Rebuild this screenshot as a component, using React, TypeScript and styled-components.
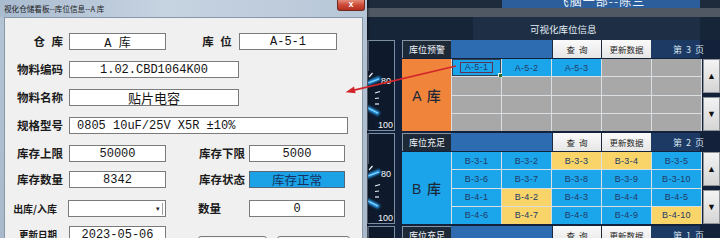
import React from 'react';
import styled, { createGlobalStyle } from 'styled-components';

const monoStack = `"Liberation Mono", "Noto Sans CJK SC", monospace`;
const cjkStack = `"Noto Sans CJK SC", "Noto Sans", sans-serif`;
const uiStack = `"Liberation Sans", "Noto Sans CJK SC", sans-serif`;

const GlobalStyle = createGlobalStyle`
    html, body {
        margin: 0;
        padding: 0;
        background: #16253a;
        overflow: hidden;
    }
    body {
        font-family: ${cjkStack};
    }
`;

const Screen = styled.div`
    position: relative;
    width: 720px;
    height: 238px;
    overflow: hidden;
    display: flex;
    background: #16253a;
`;

/* ---------- dialog window ---------- */

const Window = styled.div`
    flex: none;
    width: 367px;
    height: 262px;
    display: flex;
    flex-direction: column;
    background: linear-gradient(180deg, #b6c5d6 0%, #a8b8ca 100%);
    box-shadow: 1px 0 2px rgba(0, 0, 0, 0.6);
    z-index: 1;
`;

const TitleBar = styled.div`
    height: 17px;
    flex: none;
    display: flex;
    align-items: center;
    padding-left: 4px;
    background: linear-gradient(90deg, #a9bbcf 0%, #c6d3e1 45%, #b7c6d7 100%);
`;

const TitleText = styled.span`
    font-size: 7.6px;
    color: #1b1b1b;
    white-space: nowrap;
`;

const CloseButton = styled.div`
    margin-left: auto;
    margin-right: 2px;
    align-self: flex-start;
    width: 28px;
    height: 11px;
    box-sizing: border-box;
    background: linear-gradient(180deg, #e58b79 0%, #cc4a37 50%, #b3301f 100%);
    border: 1px solid #6e2a22;
    border-top: none;
    border-radius: 0 0 3px 3px;
    color: #fff;
    font: bold 9px/9px ${uiStack};
    text-align: center;
`;

const Form = styled.div`
    flex: 1;
    margin: 0 4px;
    padding-top: 15px;
    background: #f0f0f0;
    border: 1px solid #8797aa;
    display: flex;
    flex-direction: column;
`;

const Row = styled.div<{ $mt?: number; $top?: boolean }>`
    display: flex;
    align-items: ${p => (p.$top ? 'flex-start' : 'center')};
    margin-top: ${p => p.$mt ?? 0}px;
`;

const Label = styled.div<{ $w: number; $ml?: number; $size?: number; $align?: string }>`
    flex: none;
    width: ${p => p.$w}px;
    margin-left: ${p => p.$ml ?? 0}px;
    text-align: ${p => p.$align ?? 'right'};
    font-size: ${p => p.$size ?? 11.5}px;
    font-weight: 700;
    line-height: 17px;
    color: #1b1b1b;
    white-space: nowrap;
    word-spacing: 4px;
`;

const Field = styled.div<{ $w: number; $ml?: number; $status?: boolean; $start?: boolean; $size?: number }>`
    flex: none;
    box-sizing: border-box;
    width: ${p => p.$w}px;
    height: 17px;
    margin-left: ${p => p.$ml ?? 0}px;
    padding: 0 ${p => (p.$start ? 7 : 0)}px;
    display: flex;
    align-items: center;
    justify-content: ${p => (p.$start ? 'flex-start' : 'center')};
    background: ${p => (p.$status ? '#1ba1e6' : '#fff')};
    border: 1px solid ${p => (p.$status ? '#55687a' : '#7b7b7b')};
    color: ${p => (p.$status ? '#17325e' : '#141414')};
    font-family: ${monoStack};
    font-size: ${p => p.$size ?? 12}px;
    white-space: nowrap;
`;

const ComboBox = styled(Field)`
    justify-content: flex-end;
    padding-right: 2px;
`;

const ComboArrow = styled.span`
    width: 9px;
    height: 12px;
    border-right: 1px solid #a0a0a0;
    display: flex;
    align-items: center;
    justify-content: center;
    font: 7px/1 ${uiStack};
    color: #222;
`;

const DialogButton = styled.div<{ $w: number; $ml: number }>`
    flex: none;
    width: ${p => p.$w}px;
    height: 22px;
    margin: 10px 0 0 ${p => p.$ml}px;
    box-sizing: border-box;
    border: 1px solid #7a7a7a;
    border-radius: 3px;
    background: linear-gradient(180deg, #f6f6f6, #dddddd);
`;

/* ---------- dashboard ---------- */

const Dashboard = styled.div`
    flex: 1;
    display: flex;
    flex-direction: column;
    background: #13213a;
`;

const TopStrip = styled.div`
    height: 8px;
    flex: none;
    display: flex;
    background: #1d2b3d;
`;

const Banner = styled.div`
    margin-left: 135px;
    width: 198px;
    height: 8px;
    overflow: hidden;
    display: flex;
    justify-content: center;
    align-items: flex-end;
    background: #2c5e9b;
`;

const BannerText = styled.span`
    font-size: 12px;
    line-height: 15px;
    color: #eef4fa;
    letter-spacing: 1px;
    white-space: nowrap;
`;

const GrayBand = styled.div`
    height: 9px;
    flex: none;
    background: #4f5863;
`;

const TitleBand = styled.div`
    height: 23px;
    flex: none;
    display: flex;
    align-items: center;
    background: linear-gradient(90deg, #172538 0, #172538 106px, #1e2f45 106px, #1e2f45 333px, #172538 333px);
`;

const BoardTitle = styled.span`
    margin-left: 163px;
    font-size: 9.5px;
    color: #e4edf6;
    white-space: nowrap;
`;

const Content = styled.div`
    display: flex;
    align-items: flex-start;
`;

const GaugeColumn = styled.div`
    flex: none;
    width: 28px;
    display: flex;
    flex-direction: column;
    gap: 2px;
`;

const GaugePanel = styled.div`
    height: 91px;
    box-sizing: border-box;
    border: 1px solid #7b8ea2;
    background: #0e1a2b;
    overflow: hidden;
`;

const Table = styled.div`
    flex: 1;
    margin-left: 7px;
    display: flex;
    flex-direction: column;
    gap: 2px;
`;

const Section = styled.div`
    display: flex;
    flex-direction: column;
    gap: 1px;
`;

const HeaderRow = styled.div`
    height: 18px;
    display: grid;
    grid-template-columns: 49px 101px 49px 50px 49px 1fr;
`;

const HeaderLabel = styled.div`
    box-sizing: border-box;
    border-top: 1px solid #8593a3;
    border-left: 1px solid #8593a3;
    background: #1e2938;
    color: #eef2f6;
    font-size: 9px;
    display: flex;
    align-items: center;
    justify-content: center;
    white-space: nowrap;
`;

const HeaderBar = styled.div`
    background: #2e6cb2;
`;

const HeaderButton = styled.div`
    box-sizing: border-box;
    border-left: 1px solid #1b2a3c;
    background: linear-gradient(180deg, #fafafa, #e6e6e6);
    color: #1e1e1e;
    display: flex;
    align-items: center;
    justify-content: center;
    white-space: nowrap;
    word-spacing: 2px;
    font-size: 8.5px;
`;

const PageTag = styled.div`
    background: #1c3a63;
    color: #d9e4f0;
    font-size: 9px;
    display: flex;
    align-items: center;
    padding-left: 22px;
    white-space: nowrap;
    word-spacing: 2px;
`;

const SectionBody = styled.div`
    height: 72px;
    display: grid;
    grid-template-columns: 49px 251px 1fr;
`;

const StoreCell = styled.div<{ $tone: 'orange' | 'blue' }>`
    background: ${p => (p.$tone === 'orange' ? '#f0843b' : '#1ba4e9')};
    color: #1c2738;
    font: 500 14px ${uiStack};
    display: flex;
    align-items: center;
    justify-content: center;
    word-spacing: 2px;
`;

const SlotGrid = styled.div`
    display: grid;
    grid-template-columns: repeat(5, 1fr);
    grid-template-rows: repeat(4, 1fr);
    gap: 1px;
    padding: 0 1px;
    background: #dadfe4;
`;

const slotColours: Record<Tone, string> = {
    blue: '#1ba6ec',
    yellow: '#f8d469',
    gray: '#a8a8a8',
};

const Slot = styled.div<{ $tone: Tone; $selected?: boolean }>`
    position: relative;
    background: ${p => slotColours[p.$tone]};
    box-shadow: ${p => (p.$selected ? 'inset 0 0 0 1px #2e4258' : 'none')};
    color: #213a66;
    font: 9px ${uiStack};
    letter-spacing: 0.3px;
    display: flex;
    align-items: center;
    justify-content: center;
`;

const SelectionMark = styled.span`
    border: 1px solid #5f3152;
    padding: 0 4px;
    line-height: 9px;
`;

const FillHandle = styled.span`
    position: absolute;
    right: -2px;
    bottom: -2px;
    width: 3px;
    height: 3px;
    background: #2f6a34;
    border: 1px solid #e6f2e6;
`;

const ScrollColumn = styled.div`
    display: flex;
    flex-direction: column;
    gap: 4px;
    padding-left: 1px;
`;

const ScrollButton = styled.div`
    flex: 1;
    box-sizing: border-box;
    border: 1px solid #8f9499;
    background: linear-gradient(180deg, #f3f3f3, #d5d5d5);
    color: #111;
    font: 9px ${uiStack};
    display: flex;
    align-items: center;
    justify-content: center;
`;

const ArrowLayer = styled.svg`
    position: absolute;
    left: 0;
    top: 0;
    width: 720px;
    height: 238px;
    pointer-events: none;
    z-index: 2;
`;

/* ---------- data ---------- */

type Tone = 'blue' | 'yellow' | 'gray';

interface SlotData {
    code?: string
    tone: Tone
    selected?: boolean
}

interface SectionData {
    store: string
    storeTone: 'orange' | 'blue'
    status: string
    page: number
    slots: SlotData[]
}

const gray = (n: number): SlotData[] => [...Array(n)].map(() => ({ tone: 'gray' as Tone }));

const sections: SectionData[] = [
    {
        store: 'A 库',
        storeTone: 'orange',
        status: '库位预警',
        page: 3,
        slots: [
            { code: 'A-5-1', tone: 'blue', selected: true },
            { code: 'A-5-2', tone: 'blue' },
            { code: 'A-5-3', tone: 'blue' },
            ...gray(17),
        ],
    },
    {
        store: 'B 库',
        storeTone: 'blue',
        status: '库位充足',
        page: 2,
        slots: [
            ['B-3-1', 'blue'], ['B-3-2', 'blue'], ['B-3-3', 'yellow'], ['B-3-4', 'yellow'], ['B-3-5', 'blue'],
            ['B-3-6', 'blue'], ['B-3-7', 'blue'], ['B-3-8', 'blue'], ['B-3-9', 'blue'], ['B-3-10', 'blue'],
            ['B-4-1', 'blue'], ['B-4-2', 'yellow'], ['B-4-3', 'blue'], ['B-4-4', 'blue'], ['B-4-5', 'blue'],
            ['B-4-6', 'blue'], ['B-4-7', 'yellow'], ['B-4-8', 'blue'], ['B-4-9', 'blue'], ['B-4-10', 'yellow'],
        ].map(([code, tone]) => ({ code, tone: tone as Tone })),
    },
    {
        store: 'C 库',
        storeTone: 'blue',
        status: '库位充足',
        page: 1,
        slots: gray(20),
    },
];

function Gauge({ id }: { id: string }): React.JSX.Element {
    return (
        <svg width='26' height='89' viewBox='0 0 26 89'>
            <defs>
                <filter id={id} x='-50%' y='-50%' width='200%' height='200%'>
                    <feGaussianBlur stdDeviation='1.3' />
                </filter>
            </defs>
            <line x1='0' y1='30' x2='0' y2='0' stroke='#5d6f82' strokeWidth='2' />
            <line x1='1' y1='36' x2='4.5' y2='32' stroke='#f2f6fa' strokeWidth='1.2' />
            <line x1='-2' y1='43' x2='12' y2='37' stroke='#2aa7ff' strokeWidth='4' filter={`url(#${id})`} />
            <line x1='0' y1='42' x2='11' y2='38' stroke='#8ad6ff' strokeWidth='1.2' />
            <text x='13' y='43' fill='#f4f8fc' fontSize='9' fontFamily='Liberation Sans'>80</text>
            <line x1='7' y1='52' x2='12' y2='50.5' stroke='#e8f0f8' strokeWidth='1.2' />
            <line x1='7' y1='57.5' x2='11' y2='57' stroke='#e8f0f8' strokeWidth='1.2' />
            <line x1='7' y1='63' x2='11' y2='63' stroke='#e8f0f8' strokeWidth='1.2' />
            <line x1='-2' y1='66' x2='11' y2='73' stroke='#2aa7ff' strokeWidth='4' filter={`url(#${id})`} />
            <line x1='0' y1='67' x2='10' y2='72' stroke='#8ad6ff' strokeWidth='1.2' />
            <text x='10' y='87' fill='#f4f8fc' fontSize='9' fontFamily='Liberation Sans'>100</text>
        </svg>
    );
}

function StoreSection({ data }: { data: SectionData }): React.JSX.Element {
    return (
        <Section>
            <HeaderRow>
                <HeaderLabel>{data.status}</HeaderLabel>
                <HeaderBar />
                <HeaderButton>查 询</HeaderButton>
                <HeaderButton>更新数据</HeaderButton>
                <PageTag>第 {data.page} 页</PageTag>
                <div />
            </HeaderRow>
            <SectionBody>
                <StoreCell $tone={data.storeTone}>{data.store}</StoreCell>
                <SlotGrid>
                    {data.slots.map((s, i) =>
                        <Slot key={`slot-${data.store}-${i}`} $tone={s.tone} $selected={s.selected}>
                            {s.selected ? <SelectionMark>{s.code}</SelectionMark> : s.code}
                            {s.selected && <FillHandle />}
                        </Slot>
                    )}
                </SlotGrid>
                <ScrollColumn>
                    <ScrollButton>▲</ScrollButton>
                    <ScrollButton>▼</ScrollButton>
                </ScrollColumn>
            </SectionBody>
        </Section>
    );
}

export default function App(): React.JSX.Element {
    return <>
        <GlobalStyle />
        <Screen>
            <Window>
                <TitleBar>
                    <TitleText>视化仓储看板--库位信息--A 库</TitleText>
                    <CloseButton>x</CloseButton>
                </TitleBar>
                <Form>
                    <Row>
                        <Label $w={58}>仓 库</Label>
                        <Field $w={97} $ml={6}>A 库</Field>
                        <Label $w={30} $ml={36} $align='center'>库 位</Label>
                        <Field $w={98} $ml={7}>A-5-1</Field>
                    </Row>
                    <Row $mt={11}>
                        <Label $w={58}>物料编码</Label>
                        <Field $w={170} $ml={6}>1.02.CBD1064K00</Field>
                    </Row>
                    <Row $mt={11}>
                        <Label $w={58}>物料名称</Label>
                        <Field $w={170} $ml={6} $size={13}>贴片电容</Field>
                    </Row>
                    <Row $mt={11}>
                        <Label $w={58}>规格型号</Label>
                        <Field $w={279} $ml={6} $start>0805 10uF/25V X5R ±10%</Field>
                    </Row>
                    <Row $mt={11}>
                        <Label $w={58}>库存上限</Label>
                        <Field $w={97} $ml={6}>50000</Field>
                        <Label $w={44} $ml={33}>库存下限</Label>
                        <Field $w={96} $ml={6}>5000</Field>
                    </Row>
                    <Row $mt={9}>
                        <Label $w={58}>库存数量</Label>
                        <Field $w={97} $ml={6}>8342</Field>
                        <Label $w={44} $ml={33}>库存状态</Label>
                        <Field $w={96} $ml={6} $status $size={12.5}>库存正常</Field>
                    </Row>
                    <Row $mt={12}>
                        <Label $w={52} $size={10}>出库/入库</Label>
                        <ComboBox $w={98} $ml={11}>
                            <ComboArrow>▾</ComboArrow>
                        </ComboBox>
                        <Label $w={23} $ml={32} $align='left'>数量</Label>
                        <Field $w={96} $ml={28}>0</Field>
                    </Row>
                    <Row $mt={9} $top>
                        <Label $w={52} $size={9.5}>更新日期</Label>
                        <Field $w={97} $ml={12}>2023-05-06</Field>
                        <DialogButton $w={69} $ml={32} />
                        <DialogButton $w={73} $ml={10} />
                    </Row>
                </Form>
            </Window>
            <Dashboard>
                <TopStrip>
                    <Banner>
                        <BannerText>飞脑一部--陈三</BannerText>
                    </Banner>
                </TopStrip>
                <GrayBand />
                <TitleBand>
                    <BoardTitle>可视化库位信息</BoardTitle>
                </TitleBand>
                <Content>
                    <GaugeColumn>
                        {sections.map((s, i) =>
                            <GaugePanel key={`gauge-${i}`}>
                                <Gauge id={`glow-${i}`} />
                            </GaugePanel>
                        )}
                    </GaugeColumn>
                    <Table>
                        {sections.map((s, i) => <StoreSection key={`section-${i}`} data={s} />)}
                    </Table>
                </Content>
            </Dashboard>
            <ArrowLayer viewBox='0 0 720 238'>
                <line x1='456' y1='66' x2='352' y2='90.6' stroke='#d3262b' strokeWidth='1.6' />
                <polygon points='345.5,92.2 354,86.4 355.6,93.3' fill='#d3262b' />
            </ArrowLayer>
        </Screen>
    </>;
}
